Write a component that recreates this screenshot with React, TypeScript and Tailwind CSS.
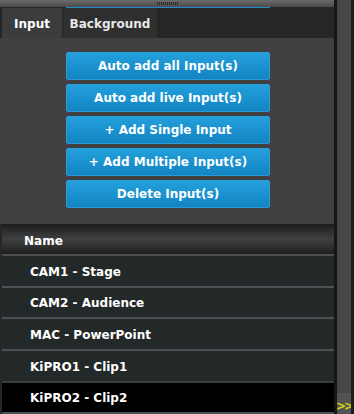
import React, { useState } from 'react';

const actions = [
  'Auto add all Input(s)',
  'Auto add live Input(s)',
  '+ Add Single Input',
  '+ Add Multiple Input(s)',
  'Delete Input(s)',
];

const inputs = [
  'CAM1 - Stage',
  'CAM2 - Audience',
  'MAC - PowerPoint',
  'KiPRO1 - Clip1',
  'KiPRO2 - Clip2',
];

const App: React.FC = () => {
  const [tab, setTab] = useState('Input');
  const [selected, setSelected] = useState(4);

  return (
    <div
      className="w-[354px] h-[414px] flex bg-[#1c1c1c] overflow-hidden text-white"
      style={{ fontFamily: '"DejaVu Sans", Verdana, sans-serif' }}
    >
      {/* Main panel */}
      <div className="w-[334px] shrink-0 flex flex-col bg-[#404040]">
        {/* Grip bar */}
        <div className="h-[7px] shrink-0 flex items-center justify-center bg-gradient-to-b from-[#6a6a6a] to-[#4c4c4c]">
          <div className="flex gap-[1px]">
            {[...Array(11)].map((_, i) => (
              <div key={i} className="w-[1px] h-[3px] bg-[#2a2a2a]" />
            ))}
          </div>
        </div>

        {/* Tabs */}
        <div className="relative h-[31px] shrink-0 flex bg-[#262626] pl-[2px]">
          <div className="absolute top-0 left-[66px] w-[204px] h-[1px] bg-[#1d8ecb]" />
          {['Input', 'Background'].map((t) => (
            <button
              key={t}
              onClick={() => setTab(t)}
              className={`h-[30px] mt-[1px] pt-[1px] flex items-center justify-center text-[12px] font-bold ${
                t === 'Input' ? 'w-[60px] bg-[#3c3c3c]' : 'w-[94px] ml-[1px] bg-[#2f2f2f]'
              } ${tab === t ? 'text-white' : 'text-[#e8e8e8]'}`}
            >
              {t}
            </button>
          ))}
        </div>

        {/* Action buttons */}
        <div className="h-[186px] shrink-0 flex flex-col items-center gap-[4px] pt-[14px] pl-[2px]">
          {actions.map((a) => (
            <button
              key={a}
              className="w-[204px] h-[28px] shrink-0 rounded-[2px] border border-[#2a9bd6] bg-gradient-to-b from-[#23a0dc] to-[#1284c1] text-[12px] font-bold text-white flex items-center justify-center"
            >
              {a}
            </button>
          ))}
        </div>

        {/* Table */}
        <div className="flex-1 flex flex-col bg-[#232829] pl-[2px]">
          <div className="h-[30px] shrink-0 flex items-center pt-[3px] pl-[22px] text-[12px] font-bold bg-gradient-to-b from-[#1c1c1c] via-[#414141] to-[#1f1f1f]">
            Name
          </div>
          {inputs.map((name, i) => (
            <div
              key={name}
              onClick={() => setSelected(i)}
              className={`shrink-0 flex items-center pt-[1px] pl-[28px] text-[12px] font-bold border-t-2 ${
                i === 1 || i === 4 ? 'h-[31px]' : 'h-[32px]'
              } ${selected === i ? 'bg-black border-[#3a3f40]' : 'border-[#4b5152]'}`}
            >
              {name}
            </div>
          ))}
          <div className="h-[2px] shrink-0 bg-[#4b5152]" />
        </div>
      </div>

      {/* Scrollbar */}
      <div className="w-[3px] shrink-0 bg-[#161616]" />
      <div className="w-[14px] shrink-0 flex flex-col bg-[#474747]">
        <div className="flex-1" />
        <div className="h-[21px] bg-[#525252] flex items-end justify-center pb-[2px]">
          <span className="text-[12px] font-bold leading-none text-[#d4d40f] tracking-[-2px]">&gt;&gt;</span>
        </div>
      </div>
      <div className="w-[3px] shrink-0 bg-[#1c1c1c]" />
    </div>
  );
};

export default App;
